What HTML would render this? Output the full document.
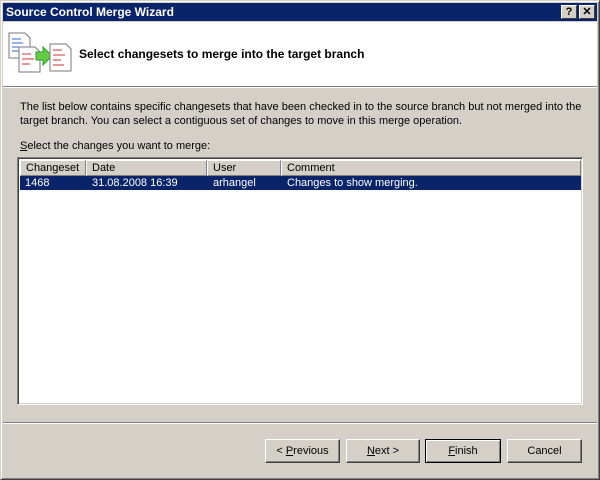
<!DOCTYPE html>
<html><head><style>
*{margin:0;padding:0;box-sizing:border-box}
body{width:600px;height:480px;background:#d4d0c8;font-family:"Liberation Sans",Tahoma,sans-serif;font-size:11px;color:#000;position:relative;overflow:hidden}
.a{position:absolute}
.frame{left:0;top:0;width:600px;height:480px;border:1px solid;border-color:#d4d0c8 #404040 #404040 #d4d0c8;box-shadow:inset 1px 1px 0 #fff,inset -1px -1px 0 #808080}
.title{left:3px;top:3px;width:594px;height:18px;background:#0a246a;color:#fff;font-weight:bold;font-size:12px;line-height:18px;padding-left:3px}
.tb{top:5px;width:16px;height:14px;background:#d4d0c8;border:1px solid;border-color:#fff #404040 #404040 #fff;font-weight:bold;font-size:11px;line-height:12px;text-align:center;color:#000}
.hdr{left:3px;top:22px;width:594px;height:64px;background:#fff}
.sep{height:2px;border-top:1px solid #808080;border-bottom:1px solid #fff}
.list{left:17px;top:157px;width:566px;height:248px;background:#fff;border:1px solid;border-color:#808080 #fff #fff #808080;box-shadow:inset 1px 1px 0 #404040,inset -1px -1px 0 #d4d0c8}
.col{top:2px;height:16px;background:#d4d0c8;border:1px solid;border-color:#fff #808080 #808080 #fff;padding-left:5px;line-height:14px}
.row{left:2px;top:18px;width:561px;height:14px;background:#0a246a;color:#fff;line-height:14px}
.row span{position:absolute}
.btn{top:439px;height:24px;background:#d4d0c8;border:1px solid;border-color:#fff #404040 #404040 #fff;box-shadow:inset -1px -1px 0 #808080;text-align:center;line-height:22px}
u{text-decoration:underline}
</style></head><body>
<div class="a frame"></div>
<div class="a title">Source Control Merge Wizard</div>
<div class="a tb" style="left:561px">?</div>
<div class="a tb" style="left:579px">✕</div>
<div class="a hdr">
<svg class="a" style="left:3px;top:8px" width="66" height="52" viewBox="0 0 66 52">
<path d="M3 3h16l5 5v20H3z" fill="#fff" stroke="#777"/>
<path d="M6 9h9M6 13h11M6 17h8M6 21h10" stroke="#36c" />
<path d="M13 17h16l5 5v20H13z" fill="#fff" stroke="#777"/>
<path d="M16 24h9M16 29h12M16 34h8" stroke="#c33"/>
<path d="M30 22h7v-5l9 9-9 9v-5h-7z" fill="#6c4" stroke="#393"/>
<path d="M44 14h16l5 5v22H44z" fill="#fff" stroke="#777"/>
<path d="M47 20h9M47 25h12M47 30h8M47 35h11" stroke="#c33"/>
</svg>
<div class="a" style="left:76px;top:25px;font-weight:bold;font-size:12px">Select changesets to merge into the target branch</div>
</div>
<div class="a sep" style="left:3px;top:86px;width:594px"></div>
<div class="a" style="left:20px;top:100px;width:570px;line-height:14px">The list below contains specific changesets that have been checked in to the source branch but not merged into the target branch. You can select a contiguous set of changes to move in this merge operation.</div>
<div class="a" style="left:20px;top:140px"><u>S</u>elect the changes you want to merge:</div>
<div class="a list">
<div class="a col" style="left:2px;width:66px">Changeset</div>
<div class="a col" style="left:68px;width:121px">Date</div>
<div class="a col" style="left:189px;width:74px">User</div>
<div class="a col" style="left:263px;width:300px">Comment</div>
<div class="a row"><span style="left:5px">1468</span><span style="left:72px">31.08.2008 16:39</span><span style="left:193px">arhangel</span><span style="left:267px">Changes to show merging.</span></div>
</div>
<div class="a sep" style="left:3px;top:422px;width:594px"></div>
<div class="a btn" style="left:265px;width:75px">&lt; <u>P</u>revious</div>
<div class="a btn" style="left:346px;width:74px"><u>N</u>ext &gt;</div>
<div class="a btn" style="left:425px;width:76px;border:1px solid #000;box-shadow:inset 1px 1px 0 #fff,inset -1px -1px 0 #808080"><u>F</u>inish</div>
<div class="a btn" style="left:507px;width:75px">Cancel</div>
</body></html>
